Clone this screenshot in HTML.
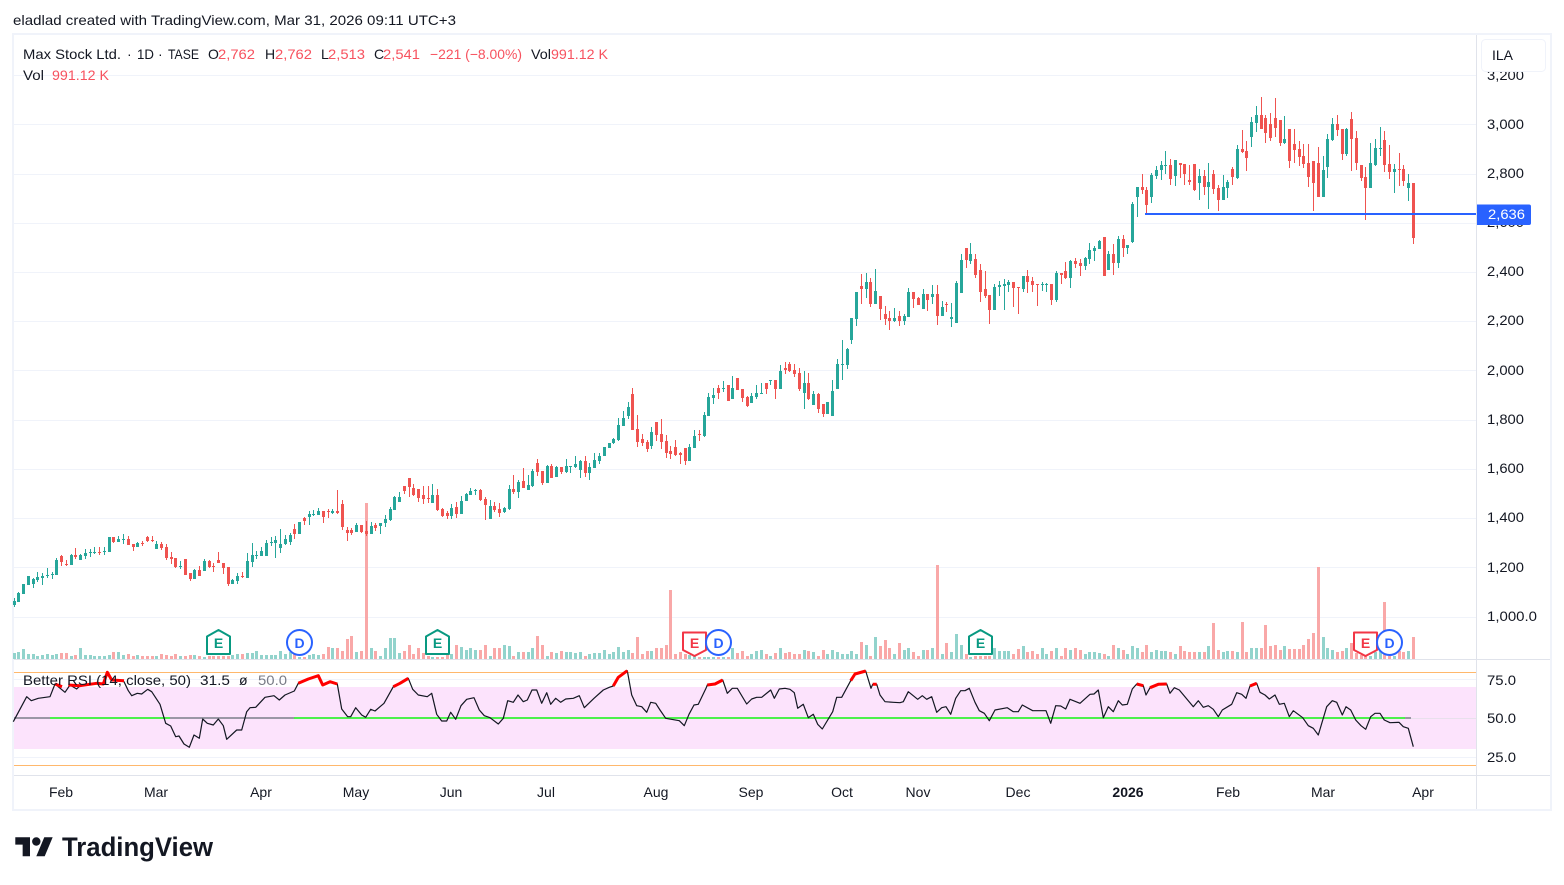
<!DOCTYPE html>
<html lang="en"><head><meta charset="utf-8"><title>Max Stock Ltd. chart</title>
<style>
html,body{margin:0;padding:0;background:#fff;width:1564px;height:885px;overflow:hidden}
svg{display:block}
text{font-family:"Liberation Sans",sans-serif;font-size:14px;fill:#131722}
text.r{fill:#f7525f}
text.gy{fill:#787b86}
.t text{text-anchor:middle}
.u{fill:#92d3cc}.d{fill:#f9a8a8}.g{fill:#26a69a}.x{fill:#ef5350}
</style></head><body>
<svg width="1564" height="885" viewBox="0 0 1564 885" xmlns="http://www.w3.org/2000/svg">
<rect width="1564" height="885" fill="#fff"/>
<text x="13" y="25" textLength="443" lengthAdjust="spacingAndGlyphs">eladlad created with TradingView.com, Mar 31, 2026 09:11 UTC+3</text>

<g shape-rendering="crispEdges">
<path fill="#f0f3fa" d="M12 33H1552V35H12zM12 809H1552V811H12zM12 33H14V811H12zM1550 33H1552V811H1550z"/>
<path stroke="#f0f3fa" fill="none" d="M14 75.5H1476M14 124.5H1476M14 174.5H1476M14 223.5H1476M14 272.5H1476M14 321.5H1476M14 370.5H1476M14 420.5H1476M14 469.5H1476M14 518.5H1476M14 567.5H1476M14 617.5H1476M14 679.5H1476M14 757.5H1476"/>
<path stroke="#e0e3eb" fill="none" d="M1476.5 35V809M14 659.5H1550M14 775.5H1550"/>

<!-- volume -->
<path class="u" d="M14 659h-1v-6h3v6zM18 659h-1v-7h3v7zM23 659h-1v-10h3v10zM28 659h-1v-5h3v5zM33 659h-1v-5h3v5zM37 659h-1v-3h3v3zM42 659h-1v-4h3v4zM47 659h-1v-5h3v5zM52 659h-1v-4h3v4zM56 659h-1v-5h3v5z"/>
<path class="d" d="M61 659h-1v-6h3v6zM66 659h-1v-6h3v6z"/>
<path class="u" d="M71 659h-1v-3h3v3z"/>
<path class="d" d="M75 659h-1v-4h3v4z"/>
<path class="u" d="M80 659h-1v-11h3v11zM85 659h-1v-4h3v4zM90 659h-1v-4h3v4zM94 659h-1v-3h3v3zM99 659h-1v-3h3v3zM104 659h-1v-3h3v3zM109 659h-1v-4h3v4z"/>
<path class="d" d="M113 659h-1v-7h3v7z"/>
<path class="u" d="M118 659h-1v-7h3v7zM123 659h-1v-4h3v4z"/>
<path class="d" d="M128 659h-1v-5h3v5zM133 659h-1v-3h3v3z"/>
<path class="u" d="M137 659h-1v-4h3v4z"/>
<path class="d" d="M142 659h-1v-3h3v3zM147 659h-1v-3h3v3zM152 659h-1v-3h3v3z"/>
<path class="u" d="M156 659h-1v-3h3v3z"/>
<path class="d" d="M161 659h-1v-5h3v5zM166 659h-1v-4h3v4zM171 659h-1v-3h3v3zM175 659h-1v-5h3v5z"/>
<path class="u" d="M180 659h-1v-3h3v3z"/>
<path class="d" d="M185 659h-1v-3h3v3zM190 659h-1v-4h3v4z"/>
<path class="u" d="M194 659h-1v-4h3v4z"/>
<path class="d" d="M199 659h-1v-3h3v3z"/>
<path class="u" d="M204 659h-1v-2h3v2z"/>
<path class="d" d="M209 659h-1v-3h3v3zM213 659h-1v-3h3v3zM218 659h-1v-3h3v3zM223 659h-1v-3h3v3zM228 659h-1v-3h3v3z"/>
<path class="u" d="M232 659h-1v-4h3v4zM237 659h-1v-5h3v5z"/>
<path class="d" d="M242 659h-1v-5h3v5z"/>
<path class="u" d="M247 659h-1v-6h3v6zM252 659h-1v-6h3v6zM256 659h-1v-8h3v8zM261 659h-1v-4h3v4zM266 659h-1v-4h3v4zM271 659h-1v-4h3v4zM275 659h-1v-4h3v4zM280 659h-1v-8h3v8zM285 659h-1v-5h3v5zM290 659h-1v-7h3v7z"/>
<path class="d" d="M294 659h-1v-5h3v5z"/>
<path class="u" d="M299 659h-1v-2h3v2z"/>
<path class="d" d="M304 659h-1v-2h3v2z"/>
<path class="u" d="M309 659h-1v-4h3v4zM313 659h-1v-5h3v5zM318 659h-1v-4h3v4z"/>
<path class="d" d="M323 659h-1v-5h3v5zM328 659h-1v-12h3v12z"/>
<path class="u" d="M332 659h-1v-11h3v11z"/>
<path class="d" d="M337 659h-1v-11h3v11zM342 659h-1v-8h3v8zM347 659h-1v-20h3v20zM351 659h-1v-23h3v23z"/>
<path class="u" d="M356 659h-1v-7h3v7z"/>
<path class="d" d="M361 659h-1v-8h3v8zM366 659h-1v-156h3v156z"/>
<path class="u" d="M371 659h-1v-11h3v11z"/>
<path class="d" d="M375 659h-1v-8h3v8z"/>
<path class="u" d="M380 659h-1v-3h3v3zM385 659h-1v-11h3v11zM390 659h-1v-21h3v21zM394 659h-1v-21h3v21zM399 659h-1v-6h3v6z"/>
<path class="d" d="M404 659h-1v-8h3v8zM409 659h-1v-14h3v14zM413 659h-1v-5h3v5zM418 659h-1v-11h3v11zM423 659h-1v-6h3v6zM428 659h-1v-3h3v3z"/>
<path class="u" d="M432 659h-1v-2h3v2z"/>
<path class="d" d="M437 659h-1v-2h3v2zM442 659h-1v-2h3v2zM447 659h-1v-5h3v5z"/>
<path class="u" d="M451 659h-1v-5h3v5z"/>
<path class="d" d="M456 659h-1v-14h3v14z"/>
<path class="u" d="M461 659h-1v-12h3v12zM466 659h-1v-9h3v9zM470 659h-1v-11h3v11zM475 659h-1v-9h3v9z"/>
<path class="d" d="M480 659h-1v-9h3v9zM485 659h-1v-14h3v14z"/>
<path class="u" d="M490 659h-1v-3h3v3z"/>
<path class="d" d="M494 659h-1v-11h3v11zM499 659h-1v-11h3v11z"/>
<path class="u" d="M504 659h-1v-14h3v14zM509 659h-1v-13h3v13z"/>
<path class="d" d="M513 659h-1v-3h3v3z"/>
<path class="u" d="M518 659h-1v-7h3v7z"/>
<path class="d" d="M523 659h-1v-7h3v7z"/>
<path class="u" d="M528 659h-1v-7h3v7zM532 659h-1v-11h3v11z"/>
<path class="d" d="M537 659h-1v-23h3v23zM542 659h-1v-14h3v14z"/>
<path class="u" d="M547 659h-1v-3h3v3z"/>
<path class="d" d="M551 659h-1v-7h3v7z"/>
<path class="u" d="M556 659h-1v-6h3v6z"/>
<path class="d" d="M561 659h-1v-8h3v8z"/>
<path class="u" d="M566 659h-1v-7h3v7zM570 659h-1v-7h3v7zM575 659h-1v-6h3v6zM580 659h-1v-7h3v7z"/>
<path class="d" d="M585 659h-1v-3h3v3z"/>
<path class="u" d="M589 659h-1v-5h3v5zM594 659h-1v-6h3v6zM599 659h-1v-6h3v6zM604 659h-1v-9h3v9zM609 659h-1v-5h3v5zM613 659h-1v-7h3v7zM618 659h-1v-12h3v12zM623 659h-1v-7h3v7zM628 659h-1v-9h3v9z"/>
<path class="d" d="M632 659h-1v-6h3v6zM637 659h-1v-22h3v22zM642 659h-1v-5h3v5zM647 659h-1v-8h3v8z"/>
<path class="u" d="M651 659h-1v-8h3v8z"/>
<path class="d" d="M656 659h-1v-11h3v11zM661 659h-1v-11h3v11zM666 659h-1v-14h3v14zM670 659h-1v-69h3v69zM675 659h-1v-5h3v5zM680 659h-1v-7h3v7zM685 659h-1v-5h3v5z"/>
<path class="u" d="M689 659h-1v-4h3v4zM694 659h-1v-3h3v3z"/>
<path class="d" d="M699 659h-1v-2h3v2z"/>
<path class="u" d="M704 659h-1v-2h3v2zM708 659h-1v-2h3v2zM713 659h-1v-2h3v2z"/>
<path class="d" d="M718 659h-1v-2h3v2z"/>
<path class="u" d="M723 659h-1v-2h3v2z"/>
<path class="d" d="M728 659h-1v-2h3v2z"/>
<path class="u" d="M732 659h-1v-11h3v11z"/>
<path class="d" d="M737 659h-1v-6h3v6zM742 659h-1v-8h3v8zM747 659h-1v-3h3v3z"/>
<path class="u" d="M751 659h-1v-5h3v5zM756 659h-1v-8h3v8zM761 659h-1v-9h3v9z"/>
<path class="d" d="M766 659h-1v-5h3v5z"/>
<path class="u" d="M770 659h-1v-3h3v3z"/>
<path class="d" d="M775 659h-1v-6h3v6z"/>
<path class="u" d="M780 659h-1v-11h3v11z"/>
<path class="d" d="M785 659h-1v-6h3v6zM789 659h-1v-7h3v7zM794 659h-1v-5h3v5zM799 659h-1v-5h3v5z"/>
<path class="u" d="M804 659h-1v-9h3v9z"/>
<path class="d" d="M808 659h-1v-8h3v8z"/>
<path class="u" d="M813 659h-1v-7h3v7z"/>
<path class="d" d="M818 659h-1v-3h3v3zM823 659h-1v-9h3v9z"/>
<path class="u" d="M827 659h-1v-5h3v5zM832 659h-1v-9h3v9zM837 659h-1v-7h3v7zM842 659h-1v-5h3v5zM847 659h-1v-5h3v5zM851 659h-1v-8h3v8zM856 659h-1v-5h3v5z"/>
<path class="d" d="M861 659h-1v-17h3v17z"/>
<path class="u" d="M866 659h-1v-14h3v14z"/>
<path class="d" d="M870 659h-1v-3h3v3z"/>
<path class="u" d="M875 659h-1v-22h3v22z"/>
<path class="d" d="M880 659h-1v-13h3v13zM885 659h-1v-19h3v19zM889 659h-1v-11h3v11z"/>
<path class="u" d="M894 659h-1v-5h3v5z"/>
<path class="d" d="M899 659h-1v-16h3v16z"/>
<path class="u" d="M904 659h-1v-9h3v9zM908 659h-1v-11h3v11z"/>
<path class="d" d="M913 659h-1v-7h3v7zM918 659h-1v-3h3v3z"/>
<path class="u" d="M923 659h-1v-9h3v9z"/>
<path class="d" d="M927 659h-1v-9h3v9z"/>
<path class="u" d="M932 659h-1v-11h3v11z"/>
<path class="d" d="M937 659h-1v-94h3v94z"/>
<path class="u" d="M942 659h-1v-5h3v5z"/>
<path class="d" d="M946 659h-1v-16h3v16z"/>
<path class="u" d="M951 659h-1v-7h3v7zM956 659h-1v-25h3v25zM961 659h-1v-14h3v14z"/>
<path class="d" d="M966 659h-1v-5h3v5z"/>
<path class="u" d="M970 659h-1v-2h3v2z"/>
<path class="d" d="M975 659h-1v-3h3v3zM980 659h-1v-3h3v3zM985 659h-1v-3h3v3zM989 659h-1v-3h3v3z"/>
<path class="u" d="M994 659h-1v-11h3v11zM999 659h-1v-8h3v8zM1004 659h-1v-8h3v8zM1008 659h-1v-8h3v8z"/>
<path class="d" d="M1013 659h-1v-5h3v5zM1018 659h-1v-10h3v10z"/>
<path class="u" d="M1023 659h-1v-13h3v13z"/>
<path class="d" d="M1027 659h-1v-7h3v7zM1032 659h-1v-8h3v8zM1037 659h-1v-5h3v5z"/>
<path class="u" d="M1042 659h-1v-11h3v11zM1046 659h-1v-5h3v5z"/>
<path class="d" d="M1051 659h-1v-8h3v8z"/>
<path class="u" d="M1056 659h-1v-11h3v11z"/>
<path class="d" d="M1061 659h-1v-3h3v3zM1065 659h-1v-11h3v11z"/>
<path class="u" d="M1070 659h-1v-9h3v9z"/>
<path class="d" d="M1075 659h-1v-11h3v11zM1080 659h-1v-9h3v9z"/>
<path class="u" d="M1085 659h-1v-5h3v5zM1089 659h-1v-7h3v7zM1094 659h-1v-7h3v7zM1099 659h-1v-6h3v6z"/>
<path class="d" d="M1104 659h-1v-5h3v5z"/>
<path class="u" d="M1108 659h-1v-3h3v3z"/>
<path class="d" d="M1113 659h-1v-14h3v14z"/>
<path class="u" d="M1118 659h-1v-11h3v11z"/>
<path class="d" d="M1123 659h-1v-9h3v9z"/>
<path class="u" d="M1127 659h-1v-5h3v5zM1132 659h-1v-13h3v13zM1137 659h-1v-11h3v11z"/>
<path class="d" d="M1142 659h-1v-7h3v7zM1146 659h-1v-14h3v14z"/>
<path class="u" d="M1151 659h-1v-7h3v7zM1156 659h-1v-9h3v9zM1161 659h-1v-8h3v8zM1165 659h-1v-8h3v8z"/>
<path class="d" d="M1170 659h-1v-7h3v7z"/>
<path class="u" d="M1175 659h-1v-5h3v5z"/>
<path class="d" d="M1180 659h-1v-13h3v13zM1184 659h-1v-8h3v8zM1189 659h-1v-7h3v7zM1194 659h-1v-7h3v7z"/>
<path class="u" d="M1199 659h-1v-7h3v7z"/>
<path class="d" d="M1204 659h-1v-7h3v7z"/>
<path class="u" d="M1208 659h-1v-13h3v13z"/>
<path class="d" d="M1213 659h-1v-36h3v36zM1218 659h-1v-9h3v9z"/>
<path class="u" d="M1223 659h-1v-7h3v7zM1227 659h-1v-8h3v8z"/>
<path class="d" d="M1232 659h-1v-8h3v8z"/>
<path class="u" d="M1237 659h-1v-7h3v7z"/>
<path class="d" d="M1242 659h-1v-37h3v37zM1246 659h-1v-7h3v7z"/>
<path class="u" d="M1251 659h-1v-11h3v11zM1256 659h-1v-11h3v11z"/>
<path class="d" d="M1261 659h-1v-11h3v11zM1265 659h-1v-34h3v34zM1270 659h-1v-13h3v13zM1275 659h-1v-14h3v14zM1280 659h-1v-9h3v9z"/>
<path class="u" d="M1284 659h-1v-13h3v13z"/>
<path class="d" d="M1289 659h-1v-10h3v10zM1294 659h-1v-10h3v10zM1299 659h-1v-10h3v10zM1303 659h-1v-14h3v14zM1308 659h-1v-20h3v20zM1313 659h-1v-26h3v26zM1318 659h-1v-92h3v92z"/>
<path class="u" d="M1323 659h-1v-22h3v22zM1327 659h-1v-11h3v11zM1332 659h-1v-9h3v9z"/>
<path class="d" d="M1337 659h-1v-7h3v7zM1342 659h-1v-8h3v8z"/>
<path class="u" d="M1346 659h-1v-11h3v11z"/>
<path class="d" d="M1351 659h-1v-16h3v16zM1356 659h-1v-6h3v6zM1361 659h-1v-4h3v4zM1365 659h-1v-3h3v3z"/>
<path class="u" d="M1370 659h-1v-3h3v3zM1375 659h-1v-7h3v7zM1380 659h-1v-10h3v10z"/>
<path class="d" d="M1384 659h-1v-57h3v57zM1389 659h-1v-3h3v3z"/>
<path class="u" d="M1394 659h-1v-3h3v3z"/>
<path class="d" d="M1399 659h-1v-8h3v8zM1403 659h-1v-7h3v7z"/>
<path class="u" d="M1408 659h-1v-8h3v8z"/>
<path class="d" d="M1413 659h-1v-22h3v22z"/>

<!-- candles -->
<path class="g" d="M14 598h1V601h1V605h-1V607h-1V605h-1V601h1zM18 592h1V593h1V602h-1V602h-1V602h-1V593h1zM23 584h1V584h1V594h-1V594h-1V594h-1V584h1zM28 576h1V576h1V585h-1V585h-1V585h-1V576h1zM33 578h1V579h1V584h-1V588h-1V584h-1V579h1zM37 572h1V577h1V580h-1V582h-1V580h-1V577h1zM42 573h1V576h1V578h-1V585h-1V578h-1V576h1zM47 568h1V575h1V576h-1V578h-1V576h-1V575h1zM52 572h1V574h1V575h-1V579h-1V575h-1V574h1zM56 558h1V560h1V575h-1V575h-1V575h-1V560h1z"/>
<path class="x" d="M61 555h1V556h1V562h-1V566h-1V562h-1V556h1zM66 560h1V564h1V565h-1V566h-1V565h-1V564h1z"/>
<path class="g" d="M71 554h1V555h1V565h-1V565h-1V565h-1V555h1z"/>
<path class="x" d="M75 548h1V555h1V557h-1V559h-1V557h-1V555h1z"/>
<path class="g" d="M80 554h1V555h1V560h-1V560h-1V560h-1V555h1zM85 549h1V553h1V556h-1V559h-1V556h-1V553h1zM90 549h1V552h1V553h-1V557h-1V553h-1V552h1zM94 547h1V552h1V553h-1V554h-1V553h-1V552h1z"/>
<path class="x" d="M99 547h1V552h1V553h-1V555h-1V553h-1V552h1z"/>
<path class="g" d="M104 547h1V551h1V552h-1V555h-1V552h-1V551h1zM109 537h1V537h1V552h-1V552h-1V552h-1V537h1z"/>
<path class="x" d="M113 537h1V537h1V542h-1V543h-1V542h-1V537h1z"/>
<path class="g" d="M118 536h1V539h1V542h-1V542h-1V542h-1V539h1zM123 534h1V539h1V540h-1V544h-1V540h-1V539h1z"/>
<path class="x" d="M128 536h1V539h1V545h-1V545h-1V545h-1V539h1zM133 544h1V544h1V547h-1V551h-1V547h-1V544h1z"/>
<path class="g" d="M137 542h1V543h1V547h-1V547h-1V547h-1V543h1z"/>
<path class="x" d="M142 541h1V543h1V544h-1V546h-1V544h-1V543h1zM147 536h1V537h1V541h-1V542h-1V541h-1V537h1zM152 536h1V540h1V541h-1V542h-1V541h-1V540h1z"/>
<path class="g" d="M156 541h1V544h1V549h-1V549h-1V549h-1V544h1z"/>
<path class="x" d="M161 542h1V544h1V548h-1V550h-1V548h-1V544h1zM166 544h1V547h1V558h-1V560h-1V558h-1V547h1zM171 552h1V557h1V559h-1V564h-1V559h-1V557h1zM175 558h1V558h1V567h-1V568h-1V567h-1V558h1z"/>
<path class="g" d="M180 561h1V566h1V567h-1V569h-1V567h-1V566h1z"/>
<path class="x" d="M185 559h1V559h1V575h-1V575h-1V575h-1V559h1zM190 573h1V573h1V579h-1V581h-1V579h-1V573h1z"/>
<path class="g" d="M194 569h1V570h1V579h-1V579h-1V579h-1V570h1z"/>
<path class="x" d="M199 566h1V570h1V576h-1V576h-1V576h-1V570h1z"/>
<path class="g" d="M204 559h1V561h1V571h-1V571h-1V571h-1V561h1z"/>
<path class="x" d="M209 560h1V561h1V567h-1V568h-1V567h-1V561h1zM213 563h1V566h1V567h-1V572h-1V567h-1V566h1zM218 552h1V560h1V563h-1V563h-1V563h-1V560h1zM223 563h1V563h1V568h-1V574h-1V568h-1V563h1zM228 567h1V567h1V584h-1V586h-1V584h-1V567h1z"/>
<path class="g" d="M232 579h1V580h1V584h-1V584h-1V584h-1V580h1zM237 573h1V576h1V581h-1V584h-1V581h-1V576h1z"/>
<path class="x" d="M242 572h1V576h1V577h-1V578h-1V577h-1V576h1z"/>
<path class="g" d="M247 553h1V561h1V578h-1V578h-1V578h-1V561h1zM252 543h1V555h1V562h-1V567h-1V562h-1V555h1zM256 551h1V555h1V556h-1V559h-1V556h-1V555h1zM261 547h1V551h1V556h-1V556h-1V556h-1V551h1zM266 540h1V543h1V556h-1V556h-1V556h-1V543h1zM271 537h1V542h1V543h-1V546h-1V543h-1V542h1zM275 536h1V540h1V543h-1V558h-1V543h-1V540h1zM280 529h1V544h1V548h-1V553h-1V548h-1V544h1zM285 535h1V539h1V544h-1V545h-1V544h-1V539h1zM290 533h1V535h1V542h-1V545h-1V542h-1V535h1z"/>
<path class="x" d="M294 524h1V529h1V534h-1V539h-1V534h-1V529h1z"/>
<path class="g" d="M299 522h1V522h1V534h-1V534h-1V534h-1V522h1z"/>
<path class="x" d="M304 517h1V518h1V521h-1V525h-1V521h-1V518h1z"/>
<path class="g" d="M309 511h1V514h1V517h-1V525h-1V517h-1V514h1zM313 510h1V514h1V515h-1V516h-1V515h-1V514h1zM318 508h1V511h1V515h-1V515h-1V515h-1V511h1z"/>
<path class="x" d="M323 511h1V511h1V517h-1V523h-1V517h-1V511h1zM328 509h1V511h1V512h-1V518h-1V512h-1V511h1z"/>
<path class="g" d="M332 509h1V511h1V513h-1V514h-1V513h-1V511h1z"/>
<path class="x" d="M337 490h1V511h1V513h-1V514h-1V513h-1V511h1zM342 500h1V504h1V527h-1V530h-1V527h-1V504h1zM347 527h1V530h1V533h-1V541h-1V533h-1V530h1zM351 528h1V530h1V533h-1V535h-1V533h-1V530h1z"/>
<path class="g" d="M356 523h1V525h1V532h-1V532h-1V532h-1V525h1z"/>
<path class="x" d="M361 525h1V525h1V532h-1V533h-1V532h-1V525h1zM366 521h1V531h1V534h-1V536h-1V534h-1V531h1z"/>
<path class="g" d="M371 522h1V526h1V534h-1V534h-1V534h-1V526h1z"/>
<path class="x" d="M375 523h1V525h1V528h-1V531h-1V528h-1V525h1z"/>
<path class="g" d="M380 523h1V523h1V526h-1V534h-1V526h-1V523h1zM385 515h1V519h1V523h-1V527h-1V523h-1V519h1zM390 507h1V509h1V520h-1V521h-1V520h-1V509h1zM394 496h1V497h1V510h-1V510h-1V510h-1V497h1zM399 492h1V497h1V502h-1V502h-1V502h-1V497h1z"/>
<path class="x" d="M404 486h1V486h1V491h-1V494h-1V491h-1V486h1zM409 478h1V478h1V487h-1V497h-1V487h-1V478h1zM413 484h1V488h1V495h-1V496h-1V495h-1V488h1zM418 489h1V489h1V498h-1V502h-1V498h-1V489h1zM423 486h1V495h1V499h-1V504h-1V499h-1V495h1zM428 486h1V498h1V499h-1V503h-1V499h-1V498h1z"/>
<path class="g" d="M432 484h1V495h1V503h-1V503h-1V503h-1V495h1z"/>
<path class="x" d="M437 489h1V495h1V510h-1V511h-1V510h-1V495h1zM442 508h1V509h1V516h-1V517h-1V516h-1V509h1zM447 511h1V513h1V516h-1V519h-1V516h-1V513h1z"/>
<path class="g" d="M451 504h1V508h1V516h-1V519h-1V516h-1V508h1z"/>
<path class="x" d="M456 502h1V507h1V514h-1V518h-1V514h-1V507h1z"/>
<path class="g" d="M461 496h1V501h1V514h-1V514h-1V514h-1V501h1zM466 493h1V494h1V501h-1V501h-1V501h-1V494h1zM470 488h1V491h1V495h-1V495h-1V495h-1V491h1zM475 489h1V490h1V491h-1V495h-1V491h-1V490h1z"/>
<path class="x" d="M480 489h1V490h1V500h-1V501h-1V500h-1V490h1zM485 497h1V499h1V505h-1V520h-1V505h-1V499h1z"/>
<path class="g" d="M490 500h1V506h1V519h-1V519h-1V519h-1V506h1z"/>
<path class="x" d="M494 502h1V506h1V510h-1V512h-1V510h-1V506h1zM499 503h1V509h1V513h-1V517h-1V513h-1V509h1z"/>
<path class="g" d="M504 507h1V508h1V512h-1V513h-1V512h-1V508h1zM509 485h1V489h1V509h-1V510h-1V509h-1V489h1z"/>
<path class="x" d="M513 475h1V489h1V492h-1V494h-1V492h-1V489h1z"/>
<path class="g" d="M518 480h1V482h1V492h-1V498h-1V492h-1V482h1z"/>
<path class="x" d="M523 468h1V481h1V488h-1V488h-1V488h-1V481h1z"/>
<path class="g" d="M528 475h1V485h1V490h-1V490h-1V490h-1V485h1zM532 469h1V471h1V486h-1V487h-1V486h-1V471h1z"/>
<path class="x" d="M537 459h1V463h1V472h-1V476h-1V472h-1V463h1zM542 471h1V471h1V483h-1V485h-1V483h-1V471h1z"/>
<path class="g" d="M547 465h1V466h1V483h-1V483h-1V483h-1V466h1z"/>
<path class="x" d="M551 464h1V466h1V478h-1V478h-1V478h-1V466h1z"/>
<path class="g" d="M556 466h1V467h1V477h-1V477h-1V477h-1V467h1z"/>
<path class="x" d="M561 467h1V467h1V472h-1V474h-1V472h-1V467h1z"/>
<path class="g" d="M566 459h1V466h1V472h-1V473h-1V472h-1V466h1zM570 466h1V466h1V467h-1V473h-1V467h-1V466h1zM575 456h1V464h1V467h-1V468h-1V467h-1V464h1zM580 460h1V461h1V470h-1V478h-1V470h-1V461h1z"/>
<path class="x" d="M585 456h1V461h1V473h-1V477h-1V473h-1V461h1z"/>
<path class="g" d="M589 463h1V467h1V473h-1V480h-1V473h-1V467h1zM594 453h1V460h1V468h-1V468h-1V468h-1V460h1zM599 453h1V456h1V461h-1V464h-1V461h-1V456h1zM604 447h1V447h1V456h-1V456h-1V456h-1V447h1zM609 443h1V443h1V448h-1V448h-1V448h-1V443h1zM613 438h1V439h1V443h-1V444h-1V443h-1V439h1zM618 418h1V425h1V440h-1V441h-1V440h-1V425h1zM623 411h1V418h1V426h-1V426h-1V426h-1V418h1zM628 402h1V407h1V416h-1V419h-1V416h-1V407h1z"/>
<path class="x" d="M632 388h1V394h1V430h-1V430h-1V430h-1V394h1zM637 415h1V429h1V442h-1V447h-1V442h-1V429h1zM642 434h1V439h1V443h-1V446h-1V443h-1V439h1zM647 440h1V442h1V449h-1V452h-1V449h-1V442h1z"/>
<path class="g" d="M651 427h1V432h1V446h-1V449h-1V446h-1V432h1z"/>
<path class="x" d="M656 422h1V422h1V435h-1V441h-1V435h-1V422h1zM661 419h1V434h1V442h-1V449h-1V442h-1V434h1zM666 435h1V441h1V453h-1V458h-1V453h-1V441h1zM670 446h1V451h1V454h-1V459h-1V454h-1V451h1zM675 440h1V447h1V455h-1V456h-1V455h-1V447h1zM680 452h1V453h1V455h-1V464h-1V455h-1V453h1zM685 448h1V448h1V461h-1V465h-1V461h-1V448h1z"/>
<path class="g" d="M689 444h1V447h1V461h-1V461h-1V461h-1V447h1zM694 430h1V436h1V448h-1V448h-1V448h-1V436h1z"/>
<path class="x" d="M699 430h1V434h1V435h-1V441h-1V435h-1V434h1z"/>
<path class="g" d="M704 412h1V415h1V436h-1V437h-1V436h-1V415h1zM708 393h1V397h1V416h-1V416h-1V416h-1V397h1zM713 388h1V395h1V398h-1V404h-1V398h-1V395h1z"/>
<path class="x" d="M718 385h1V388h1V393h-1V399h-1V393h-1V388h1z"/>
<path class="g" d="M723 381h1V388h1V389h-1V392h-1V389h-1V388h1z"/>
<path class="x" d="M728 385h1V385h1V401h-1V401h-1V401h-1V385h1z"/>
<path class="g" d="M732 376h1V388h1V399h-1V399h-1V399h-1V388h1z"/>
<path class="x" d="M737 378h1V378h1V390h-1V390h-1V390h-1V378h1zM742 389h1V389h1V398h-1V402h-1V398h-1V389h1zM747 396h1V397h1V406h-1V407h-1V406h-1V397h1z"/>
<path class="g" d="M751 393h1V396h1V403h-1V403h-1V403h-1V396h1zM756 385h1V393h1V397h-1V399h-1V397h-1V393h1zM761 383h1V393h1V394h-1V394h-1V394h-1V393h1z"/>
<path class="x" d="M766 383h1V383h1V389h-1V394h-1V389h-1V383h1z"/>
<path class="g" d="M770 380h1V380h1V381h-1V385h-1V381h-1V380h1z"/>
<path class="x" d="M775 380h1V380h1V389h-1V399h-1V389h-1V380h1z"/>
<path class="g" d="M780 365h1V371h1V389h-1V389h-1V389h-1V371h1z"/>
<path class="x" d="M785 362h1V368h1V370h-1V374h-1V370h-1V368h1zM789 362h1V364h1V371h-1V372h-1V371h-1V364h1zM794 364h1V370h1V374h-1V377h-1V374h-1V370h1zM799 368h1V373h1V389h-1V391h-1V389h-1V373h1z"/>
<path class="g" d="M804 371h1V383h1V393h-1V409h-1V393h-1V383h1z"/>
<path class="x" d="M808 373h1V383h1V399h-1V400h-1V399h-1V383h1z"/>
<path class="g" d="M813 391h1V394h1V405h-1V405h-1V405h-1V394h1z"/>
<path class="x" d="M818 393h1V394h1V409h-1V413h-1V409h-1V394h1zM823 404h1V404h1V414h-1V417h-1V414h-1V404h1z"/>
<path class="g" d="M827 402h1V402h1V414h-1V414h-1V414h-1V402h1zM832 380h1V391h1V416h-1V416h-1V416h-1V391h1zM837 359h1V364h1V389h-1V389h-1V389h-1V364h1zM842 340h1V364h1V365h-1V380h-1V365h-1V364h1zM847 348h1V349h1V365h-1V369h-1V365h-1V349h1zM851 318h1V318h1V340h-1V344h-1V340h-1V318h1zM856 292h1V292h1V319h-1V326h-1V319h-1V292h1z"/>
<path class="x" d="M861 274h1V286h1V289h-1V304h-1V289h-1V286h1z"/>
<path class="g" d="M866 273h1V282h1V289h-1V298h-1V289h-1V282h1z"/>
<path class="x" d="M870 278h1V282h1V304h-1V307h-1V304h-1V282h1z"/>
<path class="g" d="M875 269h1V291h1V304h-1V304h-1V304h-1V291h1z"/>
<path class="x" d="M880 296h1V296h1V309h-1V320h-1V309h-1V296h1zM885 306h1V314h1V319h-1V325h-1V319h-1V314h1zM889 311h1V318h1V321h-1V330h-1V321h-1V318h1z"/>
<path class="g" d="M894 308h1V318h1V321h-1V322h-1V321h-1V318h1z"/>
<path class="x" d="M899 311h1V316h1V321h-1V326h-1V321h-1V316h1z"/>
<path class="g" d="M904 314h1V316h1V321h-1V325h-1V321h-1V316h1zM908 288h1V292h1V317h-1V317h-1V317h-1V292h1z"/>
<path class="x" d="M913 292h1V292h1V299h-1V308h-1V299h-1V292h1zM918 297h1V298h1V305h-1V305h-1V305h-1V298h1z"/>
<path class="g" d="M923 289h1V294h1V309h-1V309h-1V309h-1V294h1z"/>
<path class="x" d="M927 294h1V294h1V300h-1V311h-1V300h-1V294h1z"/>
<path class="g" d="M932 285h1V294h1V297h-1V304h-1V297h-1V294h1z"/>
<path class="x" d="M937 285h1V294h1V316h-1V325h-1V316h-1V294h1z"/>
<path class="g" d="M942 301h1V307h1V316h-1V316h-1V316h-1V307h1z"/>
<path class="x" d="M946 302h1V304h1V305h-1V312h-1V305h-1V304h1z"/>
<path class="g" d="M951 303h1V317h1V319h-1V327h-1V319h-1V317h1zM956 281h1V283h1V323h-1V323h-1V323h-1V283h1zM961 254h1V260h1V293h-1V293h-1V293h-1V260h1z"/>
<path class="x" d="M966 248h1V248h1V260h-1V268h-1V260h-1V248h1z"/>
<path class="g" d="M970 243h1V254h1V261h-1V264h-1V261h-1V254h1z"/>
<path class="x" d="M975 254h1V259h1V275h-1V278h-1V275h-1V259h1zM980 264h1V270h1V292h-1V302h-1V292h-1V270h1zM985 271h1V289h1V296h-1V298h-1V296h-1V289h1zM989 295h1V295h1V310h-1V324h-1V310h-1V295h1z"/>
<path class="g" d="M994 284h1V287h1V310h-1V310h-1V310h-1V287h1zM999 281h1V285h1V287h-1V296h-1V287h-1V285h1zM1004 279h1V284h1V286h-1V310h-1V286h-1V284h1zM1008 280h1V282h1V285h-1V292h-1V285h-1V282h1z"/>
<path class="x" d="M1013 282h1V282h1V288h-1V307h-1V288h-1V282h1zM1018 287h1V287h1V288h-1V314h-1V288h-1V287h1z"/>
<path class="g" d="M1023 276h1V276h1V289h-1V292h-1V289h-1V276h1z"/>
<path class="x" d="M1027 270h1V276h1V282h-1V293h-1V282h-1V276h1zM1032 277h1V281h1V285h-1V292h-1V285h-1V281h1zM1037 284h1V284h1V285h-1V306h-1V285h-1V284h1z"/>
<path class="g" d="M1042 282h1V284h1V285h-1V291h-1V285h-1V284h1zM1046 283h1V284h1V285h-1V292h-1V285h-1V284h1z"/>
<path class="x" d="M1051 284h1V284h1V300h-1V305h-1V300h-1V284h1z"/>
<path class="g" d="M1056 271h1V273h1V300h-1V302h-1V300h-1V273h1z"/>
<path class="x" d="M1061 273h1V273h1V275h-1V284h-1V275h-1V273h1zM1065 262h1V271h1V278h-1V279h-1V278h-1V271h1z"/>
<path class="g" d="M1070 260h1V261h1V278h-1V288h-1V278h-1V261h1z"/>
<path class="x" d="M1075 258h1V261h1V264h-1V268h-1V264h-1V261h1zM1080 259h1V263h1V266h-1V276h-1V266h-1V263h1z"/>
<path class="g" d="M1085 257h1V258h1V266h-1V270h-1V266h-1V258h1zM1089 243h1V250h1V259h-1V264h-1V259h-1V250h1zM1094 246h1V248h1V251h-1V261h-1V251h-1V248h1zM1099 240h1V241h1V249h-1V249h-1V249h-1V241h1z"/>
<path class="x" d="M1104 237h1V237h1V276h-1V276h-1V276h-1V237h1z"/>
<path class="g" d="M1108 251h1V254h1V270h-1V270h-1V270h-1V254h1z"/>
<path class="x" d="M1113 244h1V254h1V263h-1V275h-1V263h-1V254h1z"/>
<path class="g" d="M1118 236h1V239h1V263h-1V268h-1V263h-1V239h1z"/>
<path class="x" d="M1123 235h1V239h1V248h-1V257h-1V248h-1V239h1z"/>
<path class="g" d="M1127 245h1V245h1V248h-1V254h-1V248h-1V245h1zM1132 202h1V204h1V242h-1V243h-1V242h-1V204h1zM1137 187h1V187h1V197h-1V217h-1V197h-1V187h1z"/>
<path class="x" d="M1142 174h1V187h1V190h-1V194h-1V190h-1V187h1zM1146 187h1V190h1V205h-1V214h-1V205h-1V190h1z"/>
<path class="g" d="M1151 173h1V175h1V197h-1V203h-1V197h-1V175h1zM1156 166h1V170h1V176h-1V179h-1V176h-1V170h1zM1161 161h1V165h1V170h-1V180h-1V170h-1V165h1zM1165 151h1V165h1V166h-1V174h-1V166h-1V165h1z"/>
<path class="x" d="M1170 159h1V165h1V179h-1V185h-1V179h-1V165h1z"/>
<path class="g" d="M1175 160h1V160h1V176h-1V186h-1V176h-1V160h1z"/>
<path class="x" d="M1180 163h1V163h1V165h-1V178h-1V165h-1V163h1zM1184 164h1V164h1V174h-1V185h-1V174h-1V164h1zM1189 165h1V180h1V182h-1V185h-1V182h-1V180h1zM1194 164h1V164h1V190h-1V191h-1V190h-1V164h1z"/>
<path class="g" d="M1199 169h1V176h1V183h-1V200h-1V183h-1V176h1z"/>
<path class="x" d="M1204 170h1V176h1V187h-1V195h-1V187h-1V176h1z"/>
<path class="g" d="M1208 163h1V182h1V187h-1V209h-1V187h-1V182h1z"/>
<path class="x" d="M1213 170h1V174h1V189h-1V194h-1V189h-1V174h1zM1218 185h1V188h1V200h-1V211h-1V200h-1V188h1z"/>
<path class="g" d="M1223 175h1V187h1V200h-1V200h-1V200h-1V187h1zM1227 180h1V182h1V188h-1V198h-1V188h-1V182h1z"/>
<path class="x" d="M1232 167h1V169h1V177h-1V185h-1V177h-1V169h1z"/>
<path class="g" d="M1237 145h1V149h1V178h-1V179h-1V178h-1V149h1z"/>
<path class="x" d="M1242 130h1V149h1V152h-1V153h-1V152h-1V149h1zM1246 141h1V151h1V158h-1V171h-1V158h-1V151h1z"/>
<path class="g" d="M1251 117h1V122h1V137h-1V147h-1V137h-1V122h1zM1256 106h1V115h1V123h-1V132h-1V123h-1V115h1z"/>
<path class="x" d="M1261 97h1V115h1V129h-1V129h-1V129h-1V115h1zM1265 115h1V118h1V133h-1V143h-1V133h-1V118h1zM1270 113h1V124h1V138h-1V141h-1V138h-1V124h1zM1275 98h1V118h1V128h-1V137h-1V128h-1V118h1zM1280 120h1V120h1V143h-1V146h-1V143h-1V120h1z"/>
<path class="g" d="M1284 116h1V139h1V143h-1V144h-1V143h-1V139h1z"/>
<path class="x" d="M1289 129h1V129h1V161h-1V168h-1V161h-1V129h1zM1294 129h1V144h1V150h-1V163h-1V150h-1V144h1zM1299 141h1V149h1V157h-1V166h-1V157h-1V149h1zM1303 144h1V156h1V164h-1V168h-1V164h-1V156h1zM1308 144h1V163h1V177h-1V187h-1V177h-1V163h1zM1313 161h1V161h1V183h-1V211h-1V183h-1V161h1zM1318 147h1V163h1V197h-1V197h-1V197h-1V163h1z"/>
<path class="g" d="M1323 156h1V170h1V197h-1V197h-1V197h-1V170h1zM1327 134h1V139h1V167h-1V178h-1V167h-1V139h1zM1332 118h1V124h1V140h-1V141h-1V140h-1V124h1z"/>
<path class="x" d="M1337 115h1V124h1V130h-1V136h-1V130h-1V124h1zM1342 129h1V129h1V154h-1V160h-1V154h-1V129h1z"/>
<path class="g" d="M1346 128h1V129h1V154h-1V156h-1V154h-1V129h1z"/>
<path class="x" d="M1351 112h1V119h1V139h-1V171h-1V139h-1V119h1zM1356 131h1V138h1V163h-1V170h-1V163h-1V138h1zM1361 165h1V165h1V178h-1V181h-1V178h-1V165h1zM1365 167h1V177h1V188h-1V220h-1V188h-1V177h1z"/>
<path class="g" d="M1370 143h1V163h1V188h-1V188h-1V188h-1V163h1zM1375 139h1V148h1V165h-1V166h-1V165h-1V148h1zM1380 127h1V148h1V149h-1V156h-1V149h-1V148h1z"/>
<path class="x" d="M1384 131h1V140h1V165h-1V172h-1V165h-1V140h1zM1389 145h1V164h1V172h-1V179h-1V172h-1V164h1z"/>
<path class="g" d="M1394 164h1V169h1V172h-1V193h-1V172h-1V169h1z"/>
<path class="x" d="M1399 153h1V169h1V170h-1V186h-1V170h-1V169h1zM1403 165h1V169h1V181h-1V186h-1V181h-1V169h1z"/>
<path class="g" d="M1408 174h1V183h1V188h-1V201h-1V188h-1V183h1z"/>
<path class="x" d="M1413 183h1V183h1V238h-1V244h-1V238h-1V183h1z"/>

<!-- blue level line -->
<rect x="1145" y="213" width="331" height="2" fill="#2962ff"/>
</g>

<!-- markers -->
<g fill="#fff" stroke-width="2" stroke-linejoin="round">
<path stroke="#089981" d="M218.5 630L230 636.5V654H207V636.5z"/>
<path stroke="#089981" d="M437.5 630L449 636.5V654H426V636.5z"/>
<path stroke="#089981" d="M980.5 630L992 636.5V654H969V636.5z"/>
<path stroke="#f23645" d="M683 632.5H706V650L694.5 656L683 650z"/>
<path stroke="#f23645" d="M1354 632.5H1377V650L1365.5 656L1354 650z"/>
<circle stroke="#2962ff" cx="299.5" cy="642.5" r="12.5"/>
<circle stroke="#2962ff" cx="718.5" cy="642.5" r="12.5"/>
<circle stroke="#2962ff" cx="1389.5" cy="642.5" r="12.5"/>
</g>
<g font-weight="bold" text-anchor="middle">
<text x="218.5" y="648" style="fill:#089981;font-weight:bold">E</text>
<text x="437.5" y="648" style="fill:#089981;font-weight:bold">E</text>
<text x="980.5" y="648" style="fill:#089981;font-weight:bold">E</text>
<text x="694.5" y="648" style="fill:#f23645;font-weight:bold">E</text>
<text x="1365.5" y="648" style="fill:#f23645;font-weight:bold">E</text>
<text x="299.5" y="648" style="fill:#2962ff;font-weight:bold">D</text>
<text x="718.5" y="648" style="fill:#2962ff;font-weight:bold">D</text>
<text x="1389.5" y="648" style="fill:#2962ff;font-weight:bold">D</text>
</g>

<!-- RSI pane -->
<g shape-rendering="crispEdges">
<rect x="14" y="687" width="1462" height="62" fill="#fce3fc"/>
<path stroke="#ffb86c" fill="none" d="M14 672.5H1476M14 765.5H1476"/>
<path stroke="#e8e0ec" fill="none" d="M1411 718.5H1476"/>
<path stroke="#9b97a6" stroke-width="2" fill="none" d="M14 718H50M170 718H294M1405 718H1411"/>
<path stroke="#4cf04c" stroke-width="2" fill="none" d="M50 718H170M294 718H1405"/>
</g>
<path fill="none" stroke="#131722" stroke-width="1.2" stroke-linejoin="round" d="M13.3 721.7L26.7 696.7L31.3 700.7L38.3 698.3L50 696.7L55 684L65 692.3L70 685L76.7 689L80 685.7L96.7 683.3L103.3 684L107.3 672.3L111.7 680L124 681.7L128.3 690.7L131.7 695.7L137.3 693.3L141.7 694L147.7 689.3L151.7 691.7L160 704.3L165.7 723.3L170.7 726L175.7 736.7L179 736L184 744L189.3 747.3L194 735L199.3 738.3L202.7 719L207.3 723.3L213.3 725L218.3 719L223.3 725.7L226.7 739.3L236.7 730L241.7 730L246.7 711.7L250 707.7L255.7 707.3L265 697.3L274 695.7L279.3 700L285 695L294.3 691L298.3 683.3L308.3 679L318.3 675.7L322.7 685L330 681.7L337.3 684L341.7 709L347.7 716.7L350.7 716.7L355.7 707.7L361.7 715L365.7 717.3L370.7 709.3L375 711L384 703.3L393.3 686.7L400 683.3L408.3 678.3L412.7 689.3L418.3 695L427.3 696.7L431.7 693.3L436.7 714.3L441.7 721L446.7 721L450.7 712.3L455.7 719.3L461 705.7L466.7 699.3L474 697.7L479.3 710L484.3 715.7L490 717.7L498.3 724L503.3 718.3L507.7 700.7L513.3 702.3L518 695L523.3 701.7L527.3 700L532 690L536.7 690L541.7 703.3L546.7 692.7L550.7 704.3L555.7 698.3L560.7 702.3L565.7 699L573.3 698.3L579.3 695.7L584.3 707.7L594 698.3L603.3 690L609.3 687.3L613.3 686L618.3 677.3L627.3 670.7L631.7 695L636.7 705.7L641.7 706.7L646.7 712.3L650.7 702.3L655.7 703.3L660 710L665.7 718.3L679.3 720.7L684.3 725.7L689 714.3L694 705L698.3 704.3L706 688.3L707.3 685L715 684L722.7 680L727.3 693.3L732.3 688.3L737.3 688.3L746.7 704L751.7 699L756.7 697.3L761.7 697.3L770.7 690L774.3 698.3L779.3 689L785 688.3L790 689.3L794.3 692.7L797.7 708.3L803.3 704.3L808.3 717.7L813.3 714.3L817.7 724.3L822.3 729L832.7 711.7L836.7 697.3L841.7 697.3L850.7 680.7L855 674L865.7 671L871 688.3L872.7 684.3L876.7 684.3L880 695L885 701.7L893.3 702.3L900 702.7L903.3 701.7L908.3 691.7L917.7 699.3L922.3 695.7L926.7 699.3L931.7 696.7L936.7 712.3L941.7 707.7L946 706.7L950.7 714.3L955.7 698.3L960.7 690.7L965 690.7L969.3 688.3L975 702.3L979.3 710.7L984.3 713.3L989.3 720.7L995 710L1007.3 707.7L1013.3 711.7L1018.3 711.7L1022.3 705L1032.7 710.7L1046 710.7L1050.7 723.3L1055.7 705.7L1060.7 706L1065.7 709L1070 699.3L1080 703.3L1090 694.3L1094 694L1098.3 690L1103.3 717.7L1108.3 706.7L1113.3 711.7L1118.3 700.7L1122.3 705L1127.3 704.3L1132.3 689L1136.7 684L1143.3 685.7L1146 695L1150 687.7L1158.3 684.3L1166.7 684L1170 693.3L1174.3 687.7L1179.3 690L1193.3 706.7L1198.3 700.7L1203.3 707.3L1208.3 705.7L1213.3 709.3L1218.3 716.7L1222.3 710L1231.7 704.3L1236.7 692.7L1241.7 694.3L1246 698.3L1250 686L1256.7 683.3L1260 692.3L1265 695L1269.3 699L1275 695L1279.3 704.3L1284.3 703.3L1289.3 716.7L1293.3 710.7L1302.7 717.7L1308.3 725.7L1313.3 728.3L1318.3 735L1326.7 706.7L1332.3 700.7L1336.7 702.3L1342.3 715L1346 706.7L1350.7 710L1355.7 720L1361 725.7L1365.7 729.3L1370.7 716.7L1375 713.3L1380 713.3L1384.3 720L1390 722.7L1399 722.3L1403.3 726.7L1408.3 728.3L1413.3 746.7"/>
<path fill="none" stroke="#ff0000" stroke-width="3" stroke-linejoin="round" d="M55 684L62 686.7M68.3 685L80 685.7L96.7 683.3L103.3 684L107.3 672.3L111.7 680L124 680.7M298.3 683.3L308.3 679L318.3 675.7L322.7 685L330 681.7L337.3 684M393.3 686.7L400 683.3L408.3 678.3M613.3 686L618.3 677.3L627.3 670.7M707.3 685L715 684L722.7 680M850.7 680.7L855 674L865.7 671M872.7 684.3H876.7M1136.7 684L1143.3 685.7M1150 687.7L1158.3 684.3L1166.7 684M1250 686L1256.7 683.3"/>

<!-- legend -->
<text x="23" y="59" textLength="98" lengthAdjust="spacingAndGlyphs">Max Stock Ltd.</text>
<text x="127" y="59">·</text>
<text x="137" y="59" textLength="17" lengthAdjust="spacingAndGlyphs">1D</text>
<text x="158" y="59">·</text>
<text x="168" y="59" textLength="31" lengthAdjust="spacingAndGlyphs">TASE</text>
<text x="208" y="59">O</text>
<text class="r" x="218" y="59" textLength="37" lengthAdjust="spacingAndGlyphs">2,762</text>
<text x="265" y="59">H</text>
<text class="r" x="275" y="59" textLength="37" lengthAdjust="spacingAndGlyphs">2,762</text>
<text x="321" y="59">L</text>
<text class="r" x="328" y="59" textLength="37" lengthAdjust="spacingAndGlyphs">2,513</text>
<text x="374" y="59">C</text>
<text class="r" x="383" y="59" textLength="37" lengthAdjust="spacingAndGlyphs">2,541</text>
<text class="r" x="430" y="59" textLength="92" lengthAdjust="spacingAndGlyphs">−221 (−8.00%)</text>
<text x="531" y="59" textLength="20" lengthAdjust="spacingAndGlyphs">Vol</text>
<text class="r" x="551" y="59" textLength="57" lengthAdjust="spacingAndGlyphs">991.12 K</text>
<text x="23" y="80" textLength="21" lengthAdjust="spacingAndGlyphs">Vol</text>
<text class="r" x="52" y="80" textLength="57" lengthAdjust="spacingAndGlyphs">991.12 K</text>

<text x="23" y="685" textLength="168" lengthAdjust="spacingAndGlyphs">Better RSI (14, close, 50)</text>
<text x="200" y="685" textLength="30" lengthAdjust="spacingAndGlyphs">31.5</text>
<text x="239" y="685">ø</text>
<text class="gy" x="258" y="685" textLength="29" lengthAdjust="spacingAndGlyphs">50.0</text>

<!-- price scale -->
<g>
<text x="1487" y="80" textLength="37" lengthAdjust="spacingAndGlyphs">3,200</text>
<text x="1487" y="129" textLength="37" lengthAdjust="spacingAndGlyphs">3,000</text>
<text x="1487" y="178" textLength="37" lengthAdjust="spacingAndGlyphs">2,800</text>
<text x="1487" y="227" textLength="37" lengthAdjust="spacingAndGlyphs">2,600</text>
<text x="1487" y="276" textLength="37" lengthAdjust="spacingAndGlyphs">2,400</text>
<text x="1487" y="325" textLength="37" lengthAdjust="spacingAndGlyphs">2,200</text>
<text x="1487" y="375" textLength="37" lengthAdjust="spacingAndGlyphs">2,000</text>
<text x="1487" y="424" textLength="37" lengthAdjust="spacingAndGlyphs">1,800</text>
<text x="1487" y="473" textLength="37" lengthAdjust="spacingAndGlyphs">1,600</text>
<text x="1487" y="522" textLength="37" lengthAdjust="spacingAndGlyphs">1,400</text>
<text x="1487" y="572" textLength="37" lengthAdjust="spacingAndGlyphs">1,200</text>
<text x="1487" y="621" textLength="50" lengthAdjust="spacingAndGlyphs">1,000.0</text>
<text x="1487" y="685" textLength="29" lengthAdjust="spacingAndGlyphs">75.0</text>
<text x="1487" y="723" textLength="29" lengthAdjust="spacingAndGlyphs">50.0</text>
<text x="1487" y="762" textLength="29" lengthAdjust="spacingAndGlyphs">25.0</text>
</g>

<rect x="1481.5" y="39.5" width="64" height="32" rx="4" fill="#fff" stroke="#f0f3fa"/>
<text x="1492" y="60" textLength="21" lengthAdjust="spacingAndGlyphs">ILA</text>

<path fill="#2962ff" d="M1477 204.5H1529a2 2 0 0 1 2 2V223a2 2 0 0 1-2 2H1477z"/>
<text x="1488" y="219" textLength="37" lengthAdjust="spacingAndGlyphs" style="fill:#fff">2,636</text>

<!-- time axis -->
<g class="t">
<text x="61" y="797">Feb</text>
<text x="156" y="797">Mar</text>
<text x="261" y="797">Apr</text>
<text x="356" y="797">May</text>
<text x="451" y="797">Jun</text>
<text x="546" y="797">Jul</text>
<text x="656" y="797">Aug</text>
<text x="751" y="797">Sep</text>
<text x="842" y="797">Oct</text>
<text x="918" y="797">Nov</text>
<text x="1018" y="797">Dec</text>
<text x="1128" y="797" style="font-weight:bold">2026</text>
<text x="1228" y="797">Feb</text>
<text x="1323" y="797">Mar</text>
<text x="1423" y="797">Apr</text>
</g>

<!-- logo -->
<g transform="translate(15.3 833.1) scale(1.05)" fill="#131722">
<path d="M14 22H7V11H0V4h14v18zM28 22h-8l7.6-18h8L28 22z"/>
<circle cx="20" cy="8" r="4"/>
</g>
<text x="62" y="856" textLength="151" lengthAdjust="spacingAndGlyphs" style="font-size:27px;font-weight:bold">TradingView</text>
</svg>
</body></html>
